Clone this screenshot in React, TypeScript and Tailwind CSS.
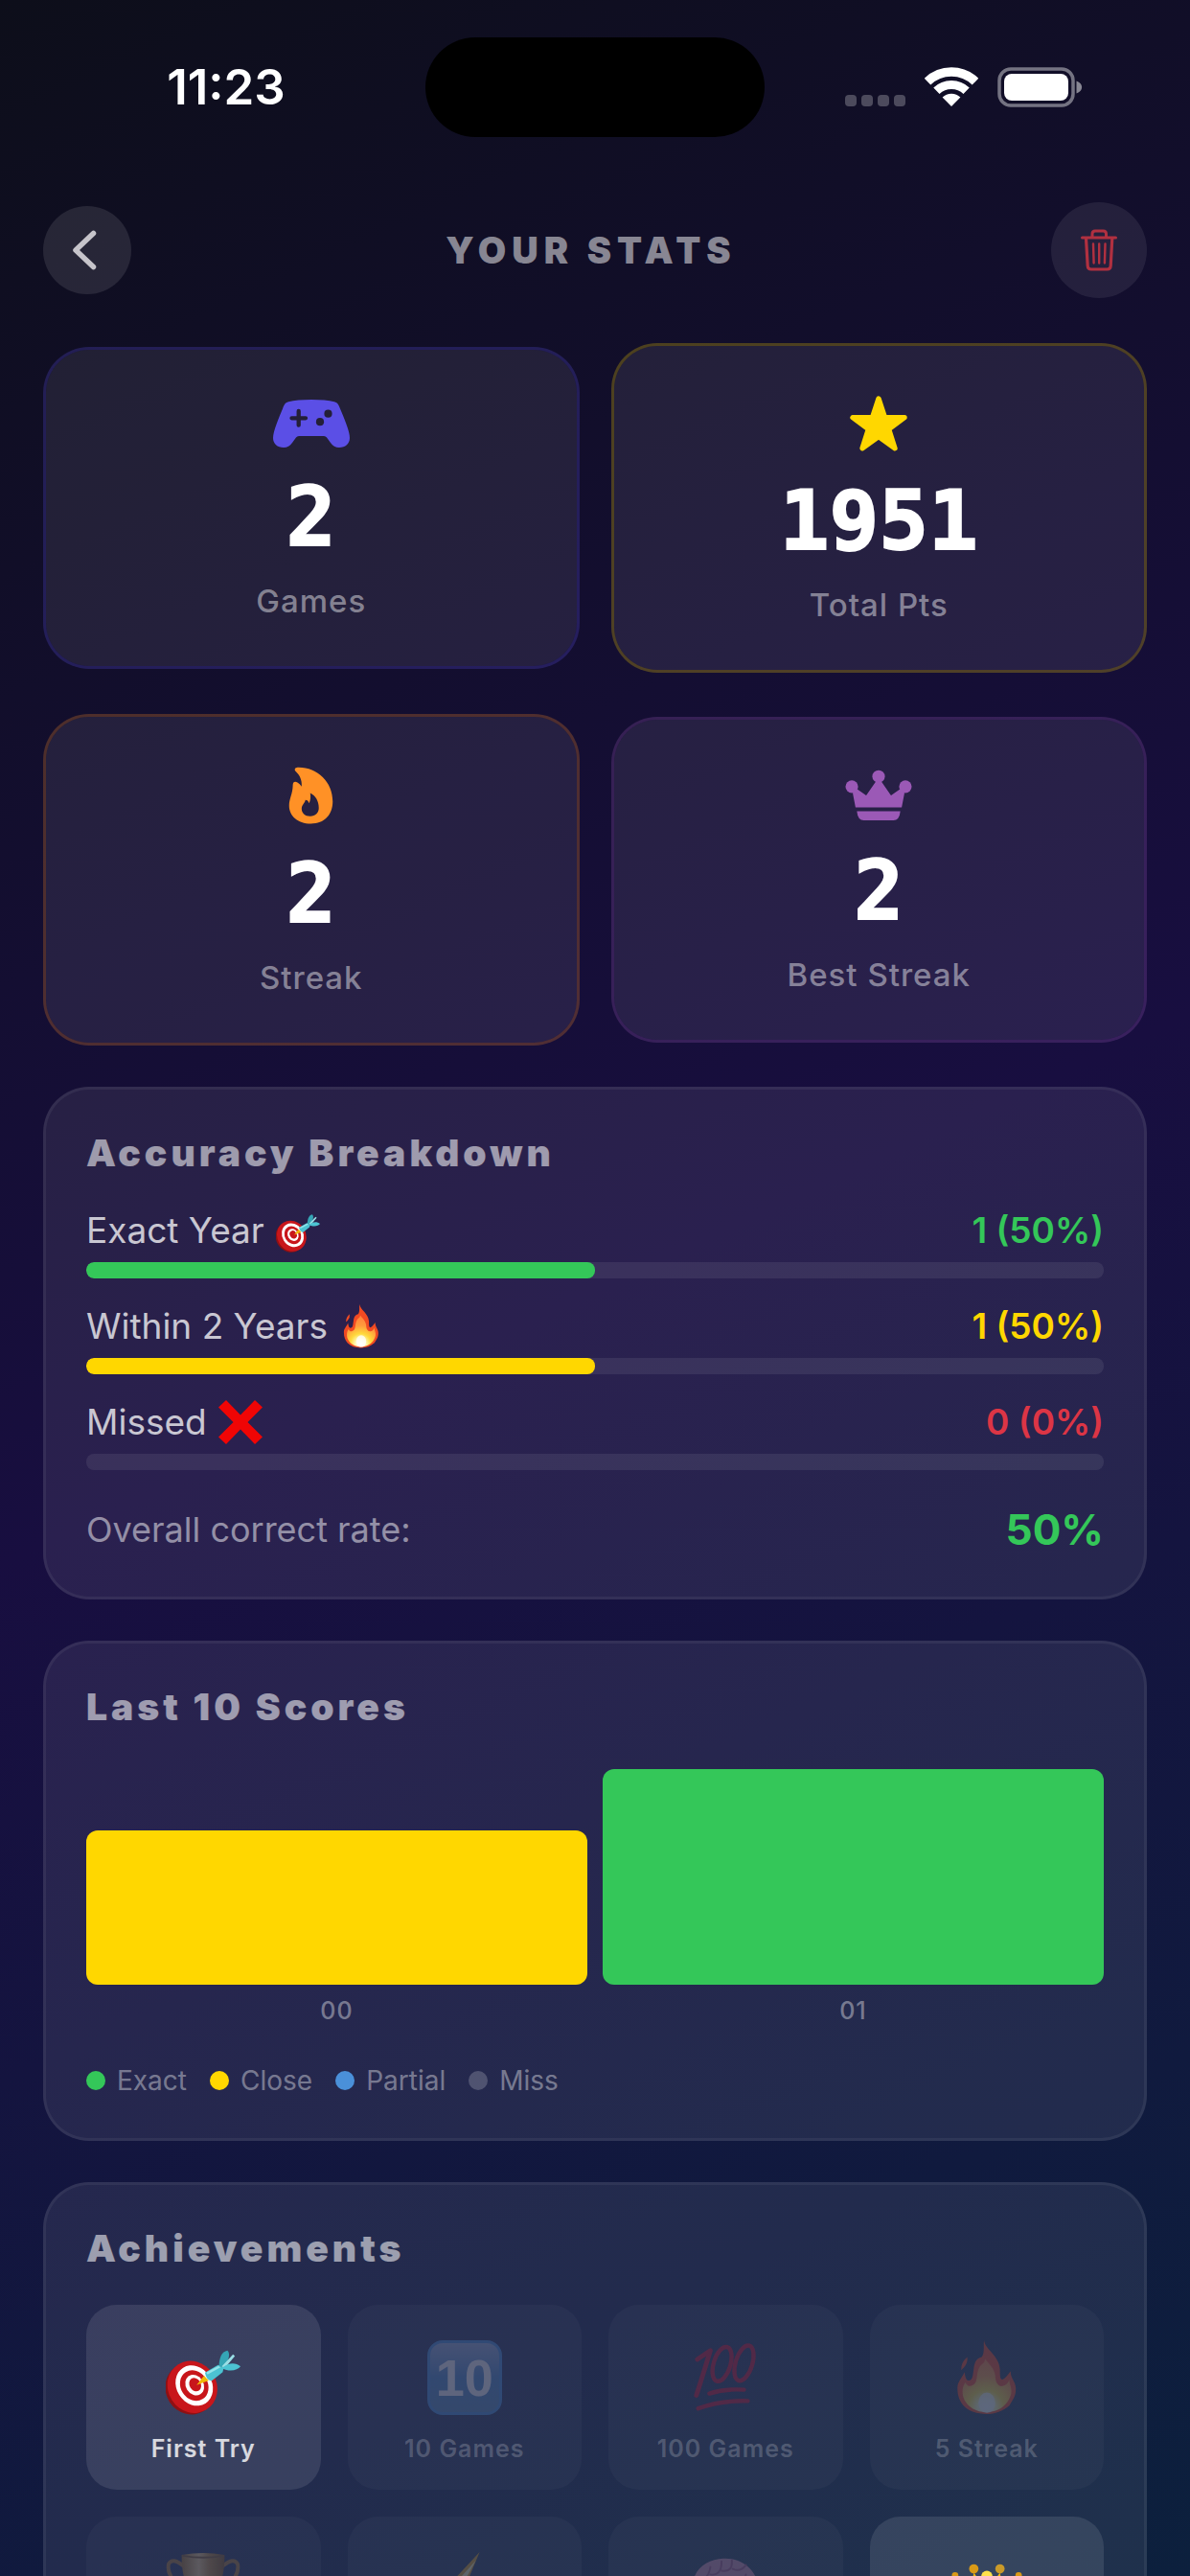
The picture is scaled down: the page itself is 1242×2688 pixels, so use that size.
import React from "react";

type IconProps = { className?: string };

/* ---------- status bar icons ---------- */

function Wifi() {
  return (
    <svg viewBox="0 0 56 42" className="h-[42px] w-14" fill="none" aria-hidden="true">
      <path d="M3 15.1A36 36 0 0 1 53 15.1" stroke="#fff" strokeWidth="9.5" />
      <path d="M12.4 24.8A22.5 22.5 0 0 1 43.6 24.8" stroke="#fff" strokeWidth="9" />
      <path d="M18.6 31.6A13.5 13.5 0 0 1 37.4 31.6L28 41Z" fill="#fff" />
    </svg>
  );
}

function Battery() {
  return (
    <svg viewBox="0 0 90 42" className="h-[42px] w-[90px]" fill="none" aria-hidden="true">
      <rect x="2" y="2" width="77" height="38" rx="12" stroke="#fff" strokeOpacity="0.42" strokeWidth="3.5" />
      <rect x="7" y="7" width="67" height="28" rx="8" fill="#fff" />
      <path d="M82.5 14.5C90 17 90 25 82.5 27.500Z" fill="#fff" fillOpacity="0.5" />
    </svg>
  );
}

/* ---------- toolbar icons ---------- */

function Chevron() {
  return (
    <svg viewBox="0 0 26 42" className="mr-1.5 h-[42px] w-[26px]" fill="none" aria-hidden="true">
      <path d="M22.500 3.500L4 21L22.500 38.500" stroke="#c6c4ca" strokeWidth="5.500" strokeLinecap="round" strokeLinejoin="round" />
    </svg>
  );
}

function Trash() {
  return (
    <svg viewBox="0 0 38 44" className="h-11 w-[38px]" fill="none" stroke="#b13040" strokeLinecap="round" strokeLinejoin="round" aria-hidden="true">
      <path d="M1.500 9H36.500" strokeWidth="3" />
      <path d="M12 8.500V5Q12 2 15 2H23.500Q26.500 2 26.500 5V8.500" strokeWidth="3" />
      <path d="M5.500 9.500L7.200 38.500Q7.400 42 11 42H27.500Q31 42 31.200 38.500L32.800 9.500" strokeWidth="3.2" />
      <path d="M13 15.500L13.600 35.500M19.200 15.500V35.500M25.500 15.500L24.900 35.500" strokeWidth="2.400" />
    </svg>
  );
}

/* ---------- stat icons ---------- */

function Gamepad() {
  return (
    <svg viewBox="0 0 80 50" className="h-[50px] w-20" aria-hidden="true">
      <path
        d="M40 0C50 0 58 .8 64 2.300C67.500 3.200 68.500 5.500 70 9.500C74 19 80 33 80 40C80 46 75.500 50 69 50C65 50 62.500 48.500 60 45L56 39.500Q55 38 53 38H27Q25 38 24 39.500L20 45C17.500 48.500 15 50 11 50C4.500 50 0 46 0 40C0 33 6 19 10 9.500C11.500 5.500 12.500 3.200 16 2.300C22 .8 30 0 40 0Z"
        fill="#5b4fe6"
      />
      <path d="M19.500 19.300H34M26.700 12V26.700" stroke="#241f38" strokeWidth="4.300" strokeLinecap="round" />
      <circle cx="57.500" cy="14.700" r="4.100" fill="#241f38" />
      <circle cx="49" cy="23.200" r="4.100" fill="#241f38" />
    </svg>
  );
}

function Star() {
  return (
    <svg viewBox="0 0 62 60" className="h-[58px] w-[62px]" aria-hidden="true">
      <path
        d="M31 3L37.800 23.500H59L42 36L48.600 56.700L31 44L13.400 56.700L20 36L3 23.500H24.200Z"
        fill="#ffd700"
        stroke="#ffd700"
        strokeWidth="5.500"
        strokeLinejoin="round"
      />
    </svg>
  );
}

function Flame() {
  return (
    <svg viewBox="0 0 47 62" className="h-[60px] w-[47px]" aria-hidden="true">
      <path
        fillRule="evenodd"
        d="M9 .7C30 0 47 16 47 37.500C47 52 38 61.500 23.500 61.500C9 61.500 0 52.500 0 42C0 34.500 4 29 4 20C4 16 6.500 15.500 9 17Q11.500 18.500 13.500 21.500C14 14 11.500 9.500 7 5C5.200 3 6.500 .8 9 .7ZM22.800 28.500C23.300 33 23.200 36 21.500 39.500Q20.500 36 17.500 36C17.500 39 13.500 41 13.500 45.500C13.500 50 17 53.500 22.700 53.500C28.500 53.500 32 50 32 44.500C32 37 28.500 31.500 22.800 28.500Z"
        fill="#ff9126"
      />
    </svg>
  );
}

function Crown() {
  return (
    <svg viewBox="0 0 72 56" className="h-[54px] w-[72px]" fill="#9b59b6" aria-hidden="true">
      <circle cx="36" cy="7.500" r="6.800" />
      <circle cx="7" cy="18.500" r="6.800" />
      <circle cx="65" cy="18.500" r="6.800" />
      <path d="M33 13H39L49 27.500Q49.500 28.300 50.200 27.600L59.500 21L64 25.500L61 41H11L8 25.500L12.500 21L21.800 27.600Q22.500 28.300 23 27.500Z" />
      <path d="M12.500 45H59.500Q58.500 55 52 55H20Q13.500 55 12.500 45Z" />
    </svg>
  );
}

/* ---------- emoji artwork ---------- */

function DartEmoji({ className }: IconProps) {
  return (
    <svg viewBox="0 0 80 80" className={className} role="img" aria-label="Dart">
      <g transform="translate(0 11)">
        <ellipse cx="26" cy="41" rx="26" ry="28" transform="rotate(-32 26 41)" fill="#8f1013" />
        <ellipse cx="28.500" cy="39" rx="26" ry="28.500" transform="rotate(-32 28.500 39)" fill="#c8161b" />
        <ellipse cx="30.500" cy="37.500" rx="19" ry="22.500" transform="rotate(-32 30.500 37.500)" fill="#fff" />
        <ellipse cx="30.500" cy="37.500" rx="14.500" ry="17" transform="rotate(-32 30.500 37.500)" fill="#c8161b" />
        <ellipse cx="31" cy="37" rx="9.500" ry="11.500" transform="rotate(-32 31 37)" fill="#fff" />
        <ellipse cx="31.500" cy="36.500" rx="6" ry="7.500" transform="rotate(-32 31.500 36.500)" fill="#c8161b" />
        <path d="M33 37L41 27L46 32Z" fill="#f2b705" />
        <path d="M42 23.500L56 15.500L62 18L61 23L49 32.500Q43 31 42 23.500Z" fill="#4cc3d2" />
        <path d="M45 24L58 17" stroke="#93e4ea" strokeWidth="2.500" strokeLinecap="round" />
        <path d="M57 17C57 8 60 1 66 0C69.500 3 68 12 60 18Z" fill="#35a5b5" />
        <path d="M60 17L72 4L74 6L63 19Z" fill="#9adfe6" />
        <path d="M61 18C68 12.500 75 13 80 17C77 21.500 68 23 60 19Z" fill="#4cc3d2" />
      </g>
    </svg>
  );
}

function FireEmoji({ className }: IconProps) {
  const id = React.useId();
  return (
    <svg viewBox="0 0 80 80" className={className} role="img" aria-label="Fire">
      <defs>
        <radialGradient id={id} gradientUnits="userSpaceOnUse" cx="39" cy="72" r="56">
          <stop offset="0" stopColor="#ffffff" />
          <stop offset="0.16" stopColor="#fffbc0" />
          <stop offset="0.34" stopColor="#ffd93b" />
          <stop offset="0.6" stopColor="#ff9a3c" />
          <stop offset="1" stopColor="#ff7a3a" />
        </radialGradient>
      </defs>
      <path
        d="M37 0C38 10 53 16 54 31C54 37 54 42 56.500 42C60 41 62 37 65.500 33C65 41 71 44 71 52C71 60 68 63 64 70C57 76 49 79 39.500 79C29 79 21 76 15 70C11 65 8.500 60 8.500 51C8.500 44 13 41 16 34C17 40 18 43 20.500 43C25 43 25 37 26 30C27 22 30 19 34.500 18C38 13 36 6 37 0Z"
        fill="#f04a22"
      />
      <path d="M19 18Q12 24 12.500 32L15.500 29Q20 24 19 18Z" fill="#f04a22" />
      <path
        d="M38 20C42 25 48 30 49 38C49 45 52 50 57 49C61 48 63 45 64 42C64 48 67 50 66 57C64 66 56 77 39 77C24 77 14 66 14 56C14 50 15 48 17 45C19 49 22 50 25 48C31 45 28 36 32 29C34 25 38 25 38 20Z"
        fill={`url(#${CSS.escape(id)})`}
      />
      <ellipse cx="40" cy="67" rx="9" ry="11" fill="#fff" fillOpacity="0.75" />
    </svg>
  );
}

function CrossEmoji({ className }: IconProps) {
  return (
    <svg viewBox="0 0 46 46" className={className} role="img" aria-label="Cross mark">
      <path d="M8 0L23 15.500L38 0L46 7.500L30.500 23L46 38.500L38 46L23 30.500L8 46L0 38.500L15.500 23L0 7.500Z" fill="#f00505" />
    </svg>
  );
}

function KeycapTenEmoji({ className }: IconProps) {
  return (
    <span className={`${className} flex items-center justify-center rounded-2xl border-3 border-[#4a90d9] bg-linear-to-b from-[#9fb4d8] via-[#4f8cc9] to-[#5c8cb8] text-white`}>
      <span className="font-['Liberation_Sans',sans-serif] text-[54px] leading-none font-bold">10</span>
    </span>
  );
}

function HundredEmoji({ className }: IconProps) {
  return (
    <svg viewBox="0 0 80 80" className={className} role="img" aria-label="Hundred points" fill="none" stroke="#d0102a" strokeLinecap="round" strokeLinejoin="round">
      <g transform="translate(6 5)">
        <path d="M4 15.500L18 6Q12 26 3 54" strokeWidth="5" />
        <ellipse cx="30.500" cy="20.500" rx="9" ry="19" transform="rotate(17 30.500 20.500)" strokeWidth="4.500" />
        <ellipse cx="54" cy="19.500" rx="9" ry="19.500" transform="rotate(17 54 19.500)" strokeWidth="4.500" />
        <path d="M17 52Q34 46.500 54 48" strokeWidth="4.500" />
        <path d="M5 68Q30 59 58 60" strokeWidth="4.500" />
      </g>
    </svg>
  );
}

function TrophyEmoji({ className }: IconProps) {
  const id = React.useId();
  return (
    <svg viewBox="0 0 80 80" className={className} role="img" aria-label="Trophy">
      <defs>
        <linearGradient id={id} x1="0" x2="1" y1="0" y2="0">
          <stop offset="0" stopColor="#a5701c" />
          <stop offset="0.4" stopColor="#f5cf86" />
          <stop offset="0.65" stopColor="#c08a35" />
          <stop offset="1" stopColor="#8a5a14" />
        </linearGradient>
      </defs>
      <path d="M19 15Q7 5 3 13C1 24 10 36 25 41M61 15Q73 5 77 13C79 24 70 36 55 41" fill="none" stroke="#b07a2c" strokeWidth="4" strokeLinecap="round" />
      <path d="M17 3Q40 -1 63 3C63 30 56 46 43 50V62H56V78H24V62H37V50C24 46 17 30 17 3Z" fill={`url(#${CSS.escape(id)})`} />
      <path d="M18 4Q40 8 62 4" fill="none" stroke="#8a5f26" strokeWidth="2" />
    </svg>
  );
}

function BoltEmoji({ className }: IconProps) {
  return (
    <svg viewBox="0 0 80 80" className={className} role="img" aria-label="Lightning">
      <path d="M56 0L16 43L37 46L22 80L65 34L43 31Z" fill="#e0a020" />
      <path d="M52 9L24 40L41 42L35 60L56 38L38 34Z" fill="#fff3b0" />
    </svg>
  );
}

function BrainEmoji({ className }: IconProps) {
  return (
    <svg viewBox="0 0 80 80" className={className} role="img" aria-label="Brain">
      <path d="M4 38C6 18 20 8 38 7C58 6 74 19 76 40C77 54 66 62 54 61L48 74L38 62C20 64 3 56 4 38Z" fill="#d78bb0" />
      <path
        d="M12 28Q22 30 24 16M24 24Q36 26 36 10M36 20Q48 22 47 9M48 18Q56 22 62 14M10 42Q24 44 28 32M28 40Q42 42 44 28M45 36Q60 38 62 24M62 34Q70 36 72 30M20 54Q36 56 40 46Q54 50 66 44"
        fill="none"
        stroke="#a95585"
        strokeWidth="2"
        strokeLinecap="round"
      />
    </svg>
  );
}

function CrownEmoji({ className }: IconProps) {
  return (
    <svg viewBox="0 0 80 80" className={className} role="img" aria-label="Crown">
      <path d="M6 26L14 66Q40 78 66 66L74 26L58 44L54 22L40 42L26 22L22 44Z" fill="#f2b90f" />
      <path d="M40 24L48 48L40 60L32 48Z" fill="#ffe45c" />
      <circle cx="26" cy="18" r="5" fill="#d99a17" />
      <circle cx="54" cy="18" r="5" fill="#c99a2a" />
      <circle cx="40" cy="26" r="6" fill="#ffe14a" />
      <circle cx="6" cy="25" r="3.500" fill="#d99a17" />
      <circle cx="74" cy="25" r="3.500" fill="#d99a17" />
      <path d="M14 62Q40 74 66 62V70Q40 82 14 70Z" fill="#d8930a" />
    </svg>
  );
}

/* ---------- building blocks ---------- */

function StatCard({ icon, value, label, border }: { icon: React.ReactNode; value: string; label: string; border: string }) {
  return (
    <div className={`flex flex-col items-center rounded-[48px] border-3 bg-white/8 bg-clip-padding pt-[52px] pb-12 ${border}`}>
      {icon}
      <div className="mt-[22px] font-['DejaVu_Sans_Mono',monospace] text-[86px] leading-[100px] font-bold text-white [-webkit-text-stroke:2px_white]">{value}</div>
      <div className="mt-[18px] text-[33px] leading-10 font-medium tracking-[1px] text-white/45">{label}</div>
    </div>
  );
}

function Panel({ title, children }: { title: string; children: React.ReactNode }) {
  return (
    <section className="rounded-[48px] border-3 border-white/6 bg-white/8 p-[42px]">
      <h2 className="text-[39px] leading-[48px] font-black tracking-[4px] text-white/55">{title}</h2>
      {children}
    </section>
  );
}

const accuracy = [
  { label: "Exact Year", emoji: <DartEmoji className="size-[46px]" />, value: "1 (50%)", percent: 50, text: "text-[#34c759]", bar: "bg-[#34c759]" },
  { label: "Within 2 Years", emoji: <FireEmoji className="size-[46px]" />, value: "1 (50%)", percent: 50, text: "text-[#ffd700]", bar: "bg-[#ffd700]" },
  { label: "Missed", emoji: <CrossEmoji className="size-[46px]" />, value: "0 (0%)", percent: 0, text: "text-[#dc3545]", bar: "bg-[#dc3545]" },
];

const scores = [
  { label: "00", height: 161, color: "bg-[#ffd700]" },
  { label: "01", height: 225, color: "bg-[#34c759]" },
];

const legend = [
  { label: "Exact", color: "bg-[#34c759]" },
  { label: "Close", color: "bg-[#ffd700]" },
  { label: "Partial", color: "bg-[#4a90d9]" },
  { label: "Miss", color: "bg-white/20" },
];

const achievements = [
  { id: "first", label: "First Try", Emoji: DartEmoji, unlocked: true },
  { id: "ten", label: "10 Games", Emoji: KeycapTenEmoji, unlocked: false },
  { id: "hundred", label: "100 Games", Emoji: HundredEmoji, unlocked: false },
  { id: "fire", label: "5 Streak", Emoji: FireEmoji, unlocked: false },
  { id: "trophy", Emoji: TrophyEmoji, unlocked: false },
  { id: "bolt", Emoji: BoltEmoji, unlocked: false },
  { id: "brain", Emoji: BrainEmoji, unlocked: false },
  { id: "crown", Emoji: CrownEmoji, unlocked: true },
];

export default function App() {
  return (
    <div className="flex h-screen flex-col overflow-hidden bg-[linear-gradient(155.2deg,#0d0e1a_0%,#180e40_50%,#0c203d_100%)] font-['Inter',sans-serif]">
      <div className="grid grid-cols-[1fr_auto_1fr] items-center pt-[39px]">
        <div className="pl-7 text-center text-[51px] leading-[60px] font-semibold text-white">11:23</div>
        <div className="h-[104px] w-[354px] rounded-full bg-black" />
        <div className="flex items-center justify-center gap-5 pr-7">
          <div className="flex gap-[5px] pt-7">
            <span className="size-3 rounded bg-white/25" />
            <span className="size-3 rounded bg-white/25" />
            <span className="size-3 rounded bg-white/25" />
            <span className="size-3 rounded bg-white/25" />
          </div>
          <Wifi />
          <Battery />
        </div>
      </div>

      <header className="mt-[68px] flex items-center justify-between px-[45px]">
        <button type="button" aria-label="Back" className="flex size-[92px] items-center justify-center rounded-full bg-white/10">
          <Chevron />
        </button>
        <h1 className="text-[38px] leading-[48px] font-black tracking-[6px] text-white/50">YOUR STATS</h1>
        <button type="button" aria-label="Delete stats" className="flex size-[100px] items-center justify-center rounded-full bg-white/8">
          <Trash />
        </button>
      </header>

      <main className="mt-[47px] flex flex-1 flex-col gap-[43px] overflow-hidden px-[45px]">
        <div className="grid grid-cols-2 items-center gap-x-[33px] gap-y-[43px]">
          <StatCard icon={<Gamepad />} value="2" label="Games" border="border-[#5b4fe6]/25" />
          <StatCard icon={<Star />} value="1951" label="Total Pts" border="border-[#ffd700]/25" />
          <StatCard icon={<Flame />} value="2" label="Streak" border="border-[#ff9126]/25" />
          <StatCard icon={<Crown />} value="2" label="Best Streak" border="border-[#9b59b6]/25" />
        </div>

        <Panel title="Accuracy Breakdown">
          <div className="mt-[33px] flex flex-col gap-[26px]">
            {accuracy.map((row) => (
              <div key={row.label}>
                <div className="flex h-12 items-center justify-between text-[37px] leading-[44px]">
                  <span className="flex items-center gap-3 text-white/75">
                    {row.label}
                    {row.emoji}
                  </span>
                  <span className={`font-semibold ${row.text}`}>{row.value}</span>
                </div>
                <div className="mt-[9px] h-[17px] overflow-hidden rounded-lg bg-white/8">
                  <div className={`h-full rounded-lg ${row.bar}`} style={{ width: `${row.percent}%` }} />
                </div>
              </div>
            ))}
          </div>
          <div className="mt-[34px] flex items-center justify-between">
            <span className="text-[36px] leading-[44px] text-white/50">Overall correct rate:</span>
            <span className="text-[44px] leading-[56px] font-bold text-[#34c759]">50%</span>
          </div>
        </Panel>

        <Panel title="Last 10 Scores">
          <div className="mt-[41px] flex items-end gap-4">
            {scores.map((score) => (
              <div key={score.label} className="flex-1 text-center">
                <div className={`rounded-xl ${score.color}`} style={{ height: score.height }} />
                <div className="mt-[11px] text-[25px] leading-8 font-medium tracking-[1px] text-white/40">{score.label}</div>
              </div>
            ))}
          </div>
          <ul className="mt-[39px] flex gap-6">
            {legend.map((item) => (
              <li key={item.label} className="flex items-center gap-3 text-[28px] leading-9 text-white/40">
                <span className={`size-5 rounded-full ${item.color}`} />
                {item.label}
              </li>
            ))}
          </ul>
        </Panel>

        <Panel title="Achievements">
          <ul className="mt-[35px] grid grid-cols-4 gap-7">
            {achievements.map(({ id, label, Emoji, unlocked }) => (
              <li key={id} className={`flex flex-col items-center rounded-4xl pt-[37px] pb-[27px] ${unlocked ? "bg-white/10" : "bg-white/3"}`}>
                <div className={unlocked ? "" : "opacity-25"}>
                  <Emoji className="size-[78px]" />
                </div>
                {label && (
                  <div className={`mt-[19px] text-[25px] leading-8 font-semibold tracking-[1px] ${unlocked ? "text-white/80" : "text-white/20"}`}>{label}</div>
                )}
              </li>
            ))}
          </ul>
        </Panel>
      </main>
    </div>
  );
}
